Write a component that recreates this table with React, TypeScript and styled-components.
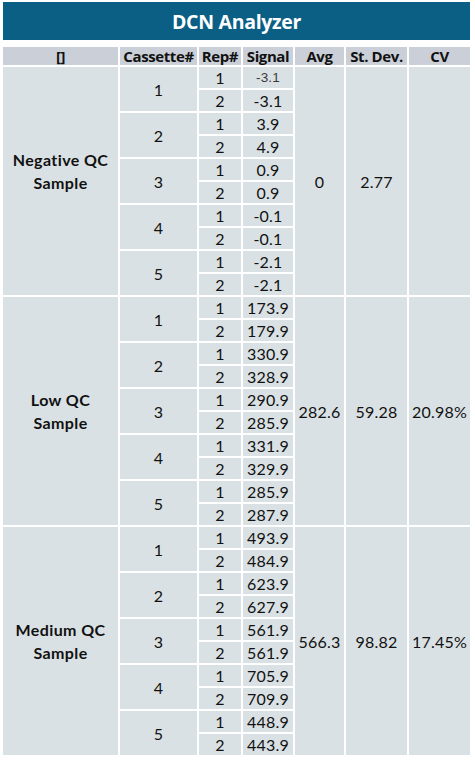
import { FC } from 'react';
import styled, { createGlobalStyle } from 'styled-components';

type Group = {
  label: string[];
  signals: string[][];
  avg: string;
  sd: string;
  cv: string;
  lift?: boolean;
};

const groups: Group[] = [
  {
    label: ['Negative QC', 'Sample'],
    signals: [['-3.1', '-3.1'], ['3.9', '4.9'], ['0.9', '0.9'], ['-0.1', '-0.1'], ['-2.1', '-2.1']],
    avg: '0',
    sd: '2.77',
    cv: '',
    lift: true,
  },
  {
    label: ['Low QC', 'Sample'],
    signals: [['173.9', '179.9'], ['330.9', '328.9'], ['290.9', '285.9'], ['331.9', '329.9'], ['285.9', '287.9']],
    avg: '282.6',
    sd: '59.28',
    cv: '20.98%',
  },
  {
    label: ['Medium QC', 'Sample'],
    signals: [['493.9', '484.9'], ['623.9', '627.9'], ['561.9', '561.9'], ['705.9', '709.9'], ['448.9', '443.9']],
    avg: '566.3',
    sd: '98.82',
    cv: '17.45%',
  },
];

const GlobalStyle = createGlobalStyle`
  body {
    margin: 0;
    background: #ffffff;
  }
`;

const Page = styled.div`
  width: 467px;
  padding: 2px 0 0 3px;
`;

const TitleBar = styled.div`
  height: 38px;
  background: #0b5f84;
  color: #ffffff;
  display: flex;
  align-items: center;
  justify-content: center;
  font-family: 'Open Sans', 'Liberation Sans', sans-serif;
  font-weight: 700;
  font-size: 19.5px;
  letter-spacing: -0.3px;
  padding-top: 1px;
  box-sizing: border-box;
`;

const Table = styled.table`
  margin: 5px 0 0 -2px;
  width: 471px;
  border-collapse: separate;
  border-spacing: 2px;
  table-layout: fixed;
`;

const HeadCell = styled.th`
  height: 18px;
  padding: 0;
  background: #cbd0d8;
  color: #111111;
  font-family: 'Open Sans', 'Liberation Sans', sans-serif;
  font-weight: 700;
  font-size: 15px;
  line-height: 18px;
  text-align: center;
  white-space: nowrap;
  letter-spacing: -0.4px;
`;

const Cell = styled.td<{ $bold?: boolean; $lift?: boolean; $thin?: boolean }>`
  height: 21px;
  padding: 0 0 ${(p) => (p.$lift ? '20px' : '0')} 0;
  background: #dae1e4;
  color: ${(p) => (p.$thin ? '#3a3a3a' : '#111111')};
  font-family: ${(p) => (p.$thin ? "'Liberation Sans', sans-serif" : "'Lato', 'DejaVu Sans', sans-serif")};
  font-weight: ${(p) => (p.$bold ? 700 : 400)};
  font-size: ${(p) => (p.$thin ? '13.5px' : '16px')};
  letter-spacing: ${(p) => (p.$bold ? '0.4px' : '0.2px')};
  line-height: ${(p) => (p.$bold ? '23px' : '21px')};
  text-align: center;
  vertical-align: middle;
  white-space: nowrap;
`;

const widths = [115, 77, 42, 50, 49, 61, 61];

const App: FC = () => {
  return (
    <Page>
      <GlobalStyle />
      <TitleBar>DCN Analyzer</TitleBar>
      <Table>
        <colgroup>
          {widths.map((w, i) => (
            <col key={i} style={{ width: w }} />
          ))}
        </colgroup>
        <thead>
          <tr>
            <HeadCell>[]</HeadCell>
            <HeadCell>Cassette#</HeadCell>
            <HeadCell>Rep#</HeadCell>
            <HeadCell>Signal</HeadCell>
            <HeadCell>Avg</HeadCell>
            <HeadCell>St. Dev.</HeadCell>
            <HeadCell>CV</HeadCell>
          </tr>
        </thead>
        <tbody>
          {groups.map((g, gi) =>
            g.signals.flatMap((pair, ci) =>
              pair.map((sig, ri) => (
                <tr key={`${gi}-${ci}-${ri}`}>
                  {ci === 0 && ri === 0 && (
                    <Cell rowSpan={10} $bold $lift={g.lift}>
                      {g.label.map((l) => (
                        <div key={l}>{l}</div>
                      ))}
                    </Cell>
                  )}
                  {ri === 0 && <Cell rowSpan={2}>{ci + 1}</Cell>}
                  <Cell>{ri + 1}</Cell>
                  <Cell $thin={gi === 0 && ci === 0 && ri === 0}>{sig}</Cell>
                  {ci === 0 && ri === 0 && (
                    <>
                      <Cell rowSpan={10}>{g.avg}</Cell>
                      <Cell rowSpan={10}>{g.sd}</Cell>
                      <Cell rowSpan={10}>{g.cv}</Cell>
                    </>
                  )}
                </tr>
              ))
            )
          )}
        </tbody>
      </Table>
    </Page>
  );
};

export default App;
